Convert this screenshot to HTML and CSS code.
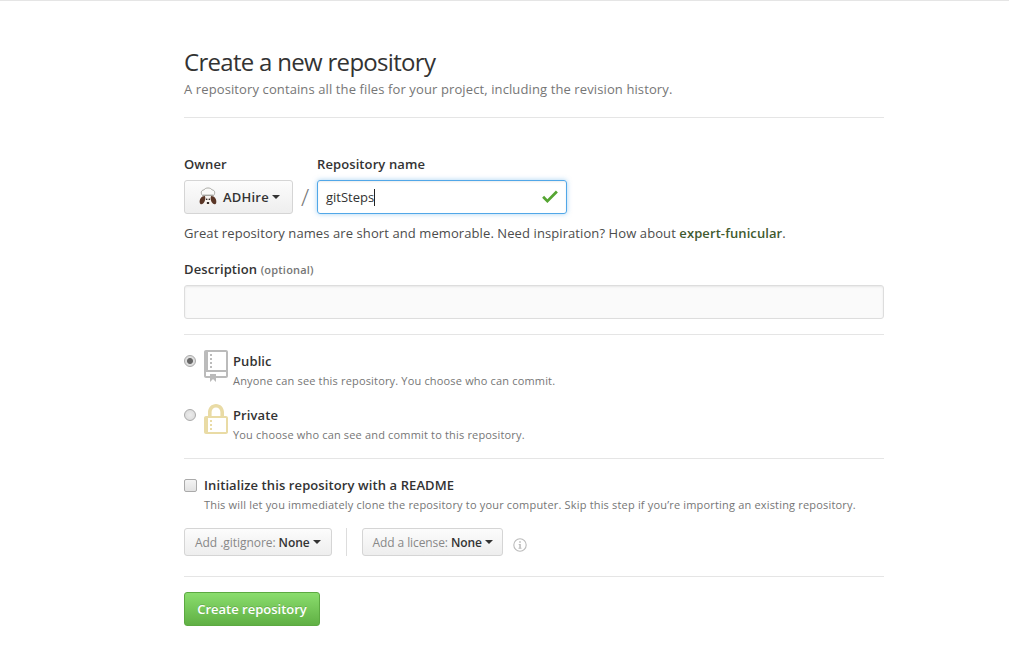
FILE: index.html
```html
<!DOCTYPE html>
<html lang="en">
<head>
  <meta charset="UTF-8">
  <meta name="viewport" content="width=device-width, initial-scale=1.0">
  <title>Create a new repository</title>
  <link rel="stylesheet" href="styles.css">
</head>
<body>
  <main class="container">
    <!-- heading -->
    <div class="subhead">
      <h1>Create a new repository</h1>
      <p>A repository contains all the files for your project, including the revision history.</p>
    </div>

    <!-- owner / name -->
    <div class="owner-row">
      <div class="field">
        <label class="label">Owner</label>
        <button type="button" class="btn owner-btn">
          <svg class="avatar" viewBox="0 0 20 20" width="20" height="20" aria-hidden="true">
            <path d="M4.500 8.500C2.500 6.500 3 3 5.800 3C7.200 .3 12.800 .3 14.200 3C17 3 17.500 6.500 15.500 8.500Z" fill="#fafaf8" stroke="#8c8c86" stroke-width=".7"/>
            <path d="M4.800 7.600H15.200V9H4.800Z" fill="#a5a5a0"/>
            <path d="M5.500 9.500H14.500L14.500 16C13.500 20 6.500 20 5.500 16Z" fill="#f7f3ee"/>
            <path d="M6.800 9C3.300 9 1 12.500 1.800 16C2.300 17.800 5 17.500 5.800 15.800C7 14.500 8 11 6.800 9Z" fill="#5a3626"/>
            <path d="M13.200 9C16.700 9 19 12.500 18.200 16C17.700 17.800 15 17.500 14.200 15.800C13 14.500 12 11 13.200 9Z" fill="#5a3626"/>
            <circle cx="8.700" cy="12.300" r=".8" fill="#1c1210"/>
            <circle cx="11.300" cy="12.300" r=".8" fill="#1c1210"/>
            <ellipse cx="10" cy="16" rx="1.300" ry="1" fill="#1c1210"/>
          </svg>
          <span class="owner-name">ADHire</span> <span class="caret"></span>
        </button>
      </div>
      <span class="slash">/</span>
      <div class="field">
        <label class="label" for="repoName">Repository name</label>
        <div class="name-box">
          <span class="typed">gitSteps</span><span class="cursor"></span>
          <svg class="check" viewBox="0 0 12 16" width="16" height="21" aria-hidden="true">
            <path fill="#55a532" fill-rule="evenodd" d="M12 5l-8 8-4-4 1.500-1.500L4 10l6.500-6.500L12 5z"/>
          </svg>
        </div>
      </div>
    </div>

    <p class="note">Great repository names are short and memorable. Need inspiration? How about <strong class="suggestion">expert-funicular</strong>.</p>

    <div class="description">
      <label class="label">Description <span class="optional">(optional)</span></label>
      <div class="desc-box"></div>
    </div>

    <hr class="rule rule-desc">

    <!-- visibility -->
    <div class="choice choice-public">
      <span class="radio radio-on"></span>
      <svg class="repo-icon" viewBox="0 0 12 16" width="24" height="32" aria-hidden="true">
        <path fill="#bbb" fill-rule="evenodd" d="M4 9H3V8h1v1zm0-3H3v1h1V6zm0-2H3v1h1V4zm0-2H3v1h1V2zm8-1v12c0 .550-.450 1-1 1H6v2l-1.500-1.500L3 16v-2H1c-.550 0-1-.450-1-1V1c0-.550.450-1 1-1h10c.550 0 1 .450 1 1zm-1 10H1v2h2v-1h3v1h5v-2zm0-10H2v9h9V1z"/>
      </svg>
      <div class="choice-text">
        <div class="choice-title">Public</div>
        <div class="choice-note">Anyone can see this repository. You choose who can commit.</div>
      </div>
    </div>

    <div class="choice choice-private">
      <span class="radio"></span>
      <svg class="repo-icon" viewBox="0 0 12 16" width="24" height="32" aria-hidden="true">
        <path fill="#e9dba5" fill-rule="evenodd" d="M4 13H3v-1h1v1zm8-6v7c0 .550-.450 1-1 1H1c-.550 0-1-.450-1-1V7c0-.550.450-1 1-1h1V4c0-2.200 1.800-4 4-4s4 1.800 4 4v2h1c.550 0 1 .450 1 1zM3.800 6h4.400V4c0-1.210-.990-2.200-2.200-2.200-1.210 0-2.200.990-2.200 2.200v2zM11 7H2v7h9V7zM4 8H3v1h1V8zm0 2H3v1h1v-1z"/>
      </svg>
      <div class="choice-text">
        <div class="choice-title">Private</div>
        <div class="choice-note">You choose who can see and commit to this repository.</div>
      </div>
    </div>

    <hr class="rule rule-init">

    <!-- readme -->
    <div class="readme">
      <span class="checkbox"></span>
      <div>
        <div class="choice-title">Initialize this repository with a README</div>
        <div class="choice-note readme-note">This will let you immediately clone the repository to your computer. Skip this step if you’re importing an existing repository.</div>
      </div>
    </div>

    <div class="extras">
      <button type="button" class="btn btn-sm">Add .gitignore: <b>None</b> <span class="caret"></span></button>
      <span class="divider"></span>
      <button type="button" class="btn btn-sm btn-license">Add a license: <b>None</b> <span class="caret"></span></button>
      <svg class="info" viewBox="0 0 14 14" width="14" height="14" aria-hidden="true">
        <circle cx="7" cy="7" r="6.200" fill="none" stroke="#bbb" stroke-width="1.100"/>
        <path d="M6.200 3.200h1.600v1.500H6.200zM5.700 6h2.100v3.800h.7v.9H5.500v-.9h.8V6.900h-.6z" fill="#bbb"/>
      </svg>
    </div>

    <hr class="rule rule-submit">

    <button type="button" class="btn-primary">Create repository</button>
  </main>
</body>
</html>
```

FILE: styles.css
```css
/* base */
body {
  font-family: "Open Sans", "Noto Sans", "Liberation Sans", sans-serif;
  font-size: 13px;
  color: #333;
  background-color: #fff;
  margin: 0;
  border-top: 1px solid #e5e5e5;
}

.container {
  width: 700px;
  margin-left: 184px;
}

/* heading */
.subhead {
  padding-top: 44px;
  height: 72px;
  border-bottom: 1px solid #e5e5e5;
}
.subhead h1 {
  font-size: 24px;
  font-weight: 400;
  line-height: 34px;
  margin: 0;
  letter-spacing: -.7px;
}
.subhead p {
  font-size: 13px;
  line-height: 20px;
  letter-spacing: .11px;
  color: #767676;
  margin: 0;
}

/* owner and name */
.owner-row {
  display: flex;
  margin-top: 37px;
}
.label {
  display: block;
  font-size: 13px;
  font-weight: 600;
  line-height: 18px;
  letter-spacing: .1px;
  margin-bottom: 7px;
}
.optional {
  font-size: 11px;
  letter-spacing: .2px;
  color: #767676;
}
.btn {
  display: flex;
  align-items: center;
  font-family: inherit;
  font-weight: 600;
  color: #333;
  background: linear-gradient(#fcfcfc, #eee);
  border: 1px solid #d5d5d5;
  border-radius: 3px;
  padding: 0;
}
.owner-btn {
  width: 109px;
  height: 34px;
  font-size: 13px;
  padding-left: 13px;
}
.owner-name {
  letter-spacing: .2px;
}
.avatar {
  margin-right: 5px;
}
.caret {
  display: inline-block;
  width: 0;
  height: 0;
  margin-left: 3px;
  border-top: 4px solid #333;
  border-left: 4px solid transparent;
  border-right: 4px solid transparent;
}
.slash {
  width: 24px;
  margin-top: 25px;
  text-align: center;
  font-size: 24px;
  line-height: 34px;
  font-weight: 300;
  color: #767676;
}
.name-box {
  display: flex;
  align-items: center;
  position: relative;
  width: 250px;
  height: 34px;
  box-sizing: border-box;
  padding-left: 8px;
  font-size: 13px;
  border: 1px solid #51a7e8;
  border-radius: 3px;
  box-shadow: inset 0 1px 2px rgba(0, 0, 0, .075), 0 0 5px rgba(81, 167, 232, .5);
}
.cursor {
  display: inline-block;
  width: 1px;
  height: 17px;
  background-color: #222;
}
.check {
  position: absolute;
  right: 8px;
  top: 5px;
}
.note {
  margin: 10px 0 0;
  line-height: 18px;
  font-size: 13px;
  letter-spacing: .09px;
  color: #4c4c4c;
}
.suggestion {
  font-weight: 600;
  color: #3f5a2f;
}

/* description */
.description {
  margin-top: 18px;
}
.description .label {
  margin-bottom: 6px;
}
.desc-box {
  height: 34px;
  box-sizing: border-box;
  background-color: #fafafa;
  border: 1px solid #ddd;
  border-radius: 3px;
  box-shadow: inset 0 1px 2px rgba(0, 0, 0, .075);
}

.rule {
  height: 0;
  margin: 0;
  border: 0;
  border-top: 1px solid #e5e5e5;
}
.rule-desc {
  margin-top: 15px;
}

/* public / private */
.choice {
  display: flex;
}
.choice-public {
  margin-top: 15px;
}
.choice-private {
  margin-top: 14px;
}
.radio {
  width: 10px;
  height: 10px;
  margin: 5px 8px 0 0;
  flex: none;
  border: 1px solid #aaa;
  border-radius: 50%;
  background: radial-gradient(#ececec, #d8d8d8);
}
.radio-on {
  background: radial-gradient(#666 0, #666 2.500px, #ddd 3.500px);
}
.repo-icon {
  flex: none;
  margin-right: 5px;
}
.choice-title {
  font-size: 13px;
  font-weight: 600;
  line-height: 21px;
  letter-spacing: .1px;
  margin-top: 1px;
}
.choice-note {
  font-size: 11px;
  line-height: 18px;
  letter-spacing: .17px;
  color: #767676;
}
.readme-note {
  letter-spacing: .18px;
}
.rule-init {
  margin-top: 14px;
}

/* readme */
.readme {
  display: flex;
  margin-top: 15px;
}
.checkbox {
  width: 11px;
  height: 11px;
  margin: 5px 7px 0 0;
  flex: none;
  background: linear-gradient(#f4f4f4, #e2e2e2);
  border: 1px solid #aaa;
  border-radius: 2px;
}

.extras {
  display: flex;
  align-items: center;
  margin-top: 14px;
}
.btn-sm {
  height: 28px;
  font-size: 12px;
  font-weight: 400;
  letter-spacing: -.05px;
  padding: 0 10px;
  color: #888;
}
.btn-sm b {
  font-weight: 600;
  color: #333;
  margin-left: 3px;
}
.btn-license {
  letter-spacing: -.1px;
  padding-right: 9px;
}
.divider {
  width: 1px;
  height: 28px;
  margin: 0 15px 0 14px;
  background-color: #ddd;
}
.info {
  margin: 5px 0 0 10px;
}
.rule-submit {
  margin-top: 20px;
}

.btn-primary {
  display: block;
  width: 136px;
  height: 34px;
  margin-top: 15px;
  font-family: inherit;
  font-size: 13px;
  font-weight: 600;
  color: #fff;
  background: linear-gradient(#8add6d, #60b044);
  border: 1px solid #5ca941;
  border-radius: 3px;
  text-shadow: 0 -1px 0 rgba(0, 0, 0, .15);
  padding: 0;
}
```
